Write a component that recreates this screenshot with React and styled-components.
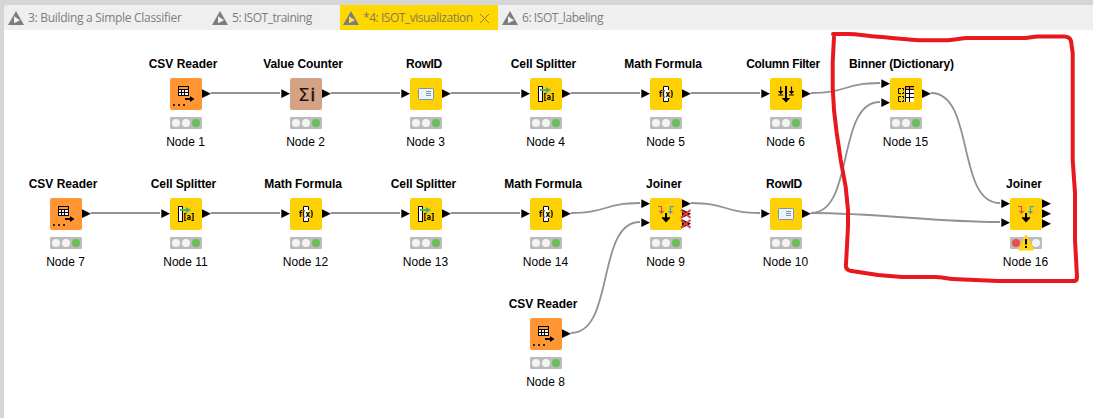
import React from "react";
import styled, { createGlobalStyle } from "styled-components";

const GlobalStyle = createGlobalStyle`
  body { margin: 0; background: #d6d6d6; }
  * { box-sizing: border-box; }
`;

const Window = styled.main`
  display: flex;
  flex-direction: column;
  width: 1093px;
  height: 418px;
  padding: 5px 0 0 4px;
  background: #d6d6d6;
  overflow: hidden;
`;

const TabBar = styled.nav`
  display: flex;
  flex: 0 0 25px;
  height: 25px;
  background: #efefef;
  border-top-left-radius: 3px;
`;

const Tab = styled.div`
  display: flex;
  align-items: center;
  width: ${(p) => p.$width}px;
  padding-left: ${(p) => p.$pad}px;
  background: ${(p) => (p.$active ? "#ffd800" : "transparent")};
  color: ${(p) => (p.$active ? "#85795a" : "#7d7d7d")};
`;

const TabLabel = styled.span`
  margin-left: 4px;
  width: ${(p) => (p.$active ? "110px" : "auto")};
  font: 12px/25px "Open Sans", "Noto Sans", sans-serif;
  letter-spacing: ${(p) => p.$spacing}px;
  white-space: nowrap;
`;

const CloseIcon = styled.svg`
  margin: 1px 0 0 7px;
`;

const Canvas = styled.section`
  position: relative;
  flex: 1;
  background: #fff;
  overflow: hidden;
`;

const Layer = styled.svg`
  position: absolute;
  inset: 0;
  pointer-events: none;
`;

const NodeBox = styled.div`
  position: absolute;
  left: ${(p) => p.$x - 48}px;
  top: ${(p) => p.$y - 52}px;
  width: 120px;
  display: flex;
  flex-direction: column;
  align-items: center;
  font-family: "Liberation Sans", Arial, sans-serif;
  font-size: 12px;
  color: #000;
  white-space: nowrap;
`;

const NodeTitle = styled.div`
  height: 22px;
  padding-top: 1px;
  margin-right: ${(p) => p.$shift * 2}px;
  line-height: 14px;
  font-weight: bold;
  letter-spacing: ${(p) => p.$spacing}px;
`;

const NodeTile = styled.svg`
  display: block;
  width: 32px;
  height: 32px;
  border-radius: 2px;
  background: ${(p) => p.$color};
  overflow: visible;
`;

const Status = styled.div`
  position: relative;
  display: flex;
  align-items: center;
  justify-content: center;
  gap: 2px;
  width: 32px;
  height: 12px;
  margin-top: 7px;
  border-radius: 1px;
  background: #bbb;
`;

const Lamp = styled.i`
  width: 8px;
  height: 8px;
  border-radius: 50%;
  background: ${(p) => p.$color};
`;

const Warning = styled.svg`
  position: absolute;
  left: 7px;
  top: -3px;
`;

const NodeName = styled.div`
  margin-top: 6px;
  margin-right: 1px;
  line-height: 14px;
`;

const Table = () => (
  <>
    <path d="M8 8h11v10H8z" fill="#000" />
    <path d="M9 9h9v2H9z" fill="#ff9633" />
    <path d="M9 12h2v2H9zM12 12h2v2h-2zM15 12h3v2h-3zM9 15h2v2H9zM12 15h2v2h-2zM15 15h3v2h-3z" fill="#fff" />
  </>
);

const icons = {
  csv: (
    <>
      <Table />
      <path d="M15 20h5v-2l4.5 3-4.5 3v-2h-5z" />
      <path d="M3 26h2v2H3zM8 26h2v2H8zM13 26h2v2H13z" fill="#3b210c" />
    </>
  ),
  counter: (
    <g fill="#1c1410">
      <text x="8" y="23" fontFamily="DejaVu Sans" fontSize="18.5">Σ</text>
      <text x="20.7" y="23" fontFamily="Liberation Sans" fontSize="18.5" stroke="#1c1410" strokeWidth=".5">i</text>
    </g>
  ),
  rowid: (
    <>
      <rect x="8.5" y="10.5" width="15" height="11" rx=".8" fill="#e9f5fb" stroke="#8397a0" />
      <path d="M16 13.5h5M16 15.5h5M16 17.5h5" stroke="#7f929b" />
    </>
  ),
  splitter: (
    <>
      <rect x="8.5" y="8.5" width="4" height="15" fill="#fff" stroke="#000" />
      <path d="M10 11h6V9l5 3-5 3v-2h-6z" fill="#45b07c" />
      <text x="13.4" y="22" fontFamily="DejaVu Sans" fontSize="8.3" fontWeight="bold" textLength="10.8" lengthAdjust="spacingAndGlyphs">[a]</text>
    </>
  ),
  math: (
    <>
      <path d="M14 8h5v16h-5z" fill="#fff" />
      <path d="M13.5 12V8.5h5V12M13.5 20v3.5h5V20" fill="none" stroke="#000" />
      <text x="9" y="19" fontFamily="DejaVu Sans" fontSize="9" fontWeight="bold" textLength="14.3" lengthAdjust="spacingAndGlyphs">f(x)</text>
    </>
  ),
  filter: (
    <>
      <path d="M10.7 8.5v6M21.5 8.5v6" stroke="#000" strokeWidth="1.2" />
      <path d="M8 13h5.4l-2.7 3.5zM18.8 13h5.4l-2.7 3.5z" />
      <path d="M8.3 17h4.9M19 17h4.9" stroke="#000" />
      <path d="M15 8h2v12h3.2L16 24.5 11.8 20H15z" />
    </>
  ),
  binner: (
    <>
      <path d="M11 10.5H8.5v5H11M12 10.5h1.5v2M13.5 14v1.5H12M11 18.5H8.5v5H11M12 18.5h1.5v2M13.5 22v1.5H12" fill="none" stroke="#000" />
      <path d="M15 8h9v16h-9z" />
      <path d="M16 9h3v2h-3zM20 9h4v2h-4z" fill="#f58a2a" />
      <path d="M16 12h3v3h-3zM20 12h4v3h-4zM16 16h3v3h-3zM20 16h4v3h-4zM16 20h3v4h-3zM20 20h4v4h-4z" fill="#fff" />
    </>
  ),
  joiner: (
    <>
      <path d="M8 8.5h3.5V14" fill="none" stroke="#e34b46" strokeWidth="1.2" />
      <path d="M8.8 13h5.4l-2.7 3z" fill="#e34b46" />
      <path d="M24 8.5h-3.5V14" fill="none" stroke="#3f9fc4" strokeWidth="1.2" />
      <path d="M17.8 13h5.4l-2.7 3z" fill="#3f9fc4" />
      <path d="M15 15h2v4.5l3-.5v1.3L16 24.5l-4-4.2V19l3 .5z" />
    </>
  ),
};

const colors = { csv: "#ff9633", counter: "#d3a384" };
const defaultColor = "#ffd105";

const titleMetrics = {
  "CSV Reader": [3, 0],
  "Value Counter": [3, -0.08],
  RowID: [2, -0.3],
  "Cell Splitter": [2.5, -0.1],
  "Math Formula": [3, -0.1],
  "Column Filter": [3, -0.28],
  "Binner (Dictionary)": [4.5, -0.17],
  Joiner: [2, 0],
};

const nodes = [
  { t: "CSV Reader", n: 1, x: 170, y: 78, i: "csv", out: [16] },
  { t: "Value Counter", n: 2, x: 290, y: 78, i: "counter", inp: [16], out: [16] },
  { t: "RowID", n: 3, x: 410, y: 78, i: "rowid", inp: [16], out: [16] },
  { t: "Cell Splitter", n: 4, x: 530, y: 78, i: "splitter", inp: [16], out: [16] },
  { t: "Math Formula", n: 5, x: 650, y: 78, i: "math", inp: [16], out: [16] },
  { t: "Column Filter", n: 6, x: 770, y: 78, i: "filter", inp: [16], out: [16] },
  { t: "Binner (Dictionary)", n: 15, x: 890, y: 78, i: "binner", inp: [6, 25], out: [16] },
  { t: "CSV Reader", n: 7, x: 50, y: 198, i: "csv", out: [16] },
  { t: "Cell Splitter", n: 11, x: 170, y: 198, i: "splitter", inp: [16], out: [16] },
  { t: "Math Formula", n: 12, x: 290, y: 198, i: "math", inp: [16], out: [16] },
  { t: "Cell Splitter", n: 13, x: 410, y: 198, i: "splitter", inp: [16], out: [16] },
  { t: "Math Formula", n: 14, x: 530, y: 198, i: "math", inp: [16], out: [16] },
  { t: "Joiner", n: 9, x: 650, y: 198, i: "joiner", inp: [6, 25], out: [6, 16, 26], off: [16, 26] },
  { t: "RowID", n: 10, x: 770, y: 198, i: "rowid", inp: [16], out: [16] },
  { t: "Joiner", n: 16, x: 1010, y: 198, i: "joiner", inp: [6, 25], out: [6, 16, 26], warn: true },
  { t: "CSV Reader", n: 8, x: 530, y: 318, i: "csv", out: [16] },
];

const straight = [
  [211, 93], [331, 93], [451, 93], [571, 93], [691, 93],
  [91, 213], [211, 213], [331, 213], [451, 213],
];

const curves = [
  [811, 93, 880, 83, 36],
  [811, 213, 880, 102, 44],
  [931, 93, 1000, 203, 44],
  [571, 213, 640, 203, 36],
  [571, 333, 640, 222, 44],
  [691, 203, 760, 213, 36],
  [811, 213, 1000, 222, 70],
];

function WorkflowNode({ node }) {
  const lamps = node.warn ? ["#ee4b4f", "#f3f3f3", "#f3f3f3"] : ["#f3f3f3", "#f3f3f3", "#6abf5b"];
  const [shift, spacing] = titleMetrics[node.t];
  return (
    <NodeBox $x={node.x} $y={node.y}>
      <NodeTitle $shift={shift} $spacing={spacing}>{node.t}</NodeTitle>
      <NodeTile viewBox="0 0 32 32" $color={colors[node.i] || defaultColor}>
        {icons[node.i]}
        {(node.inp || []).map((y) => (
          <path key={`i${y}`} d={`M-8.7 ${y - 4.7}L0 ${y - 0.3}L-8.7 ${y + 4.1}z`} />
        ))}
        {node.out.map((y) => (
          <path key={`o${y}`} d={`M32 ${y - 4.7}L41 ${y - 0.3}L32 ${y + 4.1}z`} />
        ))}
        {(node.off || []).map((y) => (
          <path key={`x${y}`} d={`M31 ${y - 4}L40.5 ${y + 3.8}M40.5 ${y - 4}L31 ${y + 3.8}`} stroke="#e4393f" strokeWidth="2" />
        ))}
      </NodeTile>
      <Status>
        {lamps.map((c, k) => <Lamp key={k} $color={c} />)}
        {node.warn && (
          <Warning width="18" height="17" viewBox="0 0 18 17">
            <path d="M9 2L15.6 15.2H2.4z" fill="#ffd60f" stroke="#ffd60f" strokeWidth="2.4" strokeLinejoin="round" />
            <path d="M8 5h2v5.5H8zM8 12h2v2H8z" />
          </Warning>
        )}
      </Status>
      <NodeName>Node {node.n}</NodeName>
    </NodeBox>
  );
}

const TabIcon = ({ fill }) => (
  <svg width="16" height="14" viewBox="0 0 16 14">
    <path d="M8 0L16 14H0z" fill="#7d7d7d" />
    <path d="M6 5.2L12 9.2 6 12.2z" fill={fill} />
  </svg>
);

const tabs = [
  { label: "3: Building a Simple Classifier", width: 204, pad: 4, spacing: -0.3 },
  { label: "5: ISOT_training", width: 132, pad: 4, spacing: -0.48 },
  { label: "*4: ISOT_visualization", width: 158, pad: 3, spacing: -0.46, active: true },
  { label: "6: ISOT_labeling", width: 140, pad: 4, spacing: -0.43 },
];

export default function App() {
  return (
    <Window>
      <GlobalStyle />
      <TabBar>
        {tabs.map((tab) => (
          <Tab key={tab.label} $width={tab.width} $pad={tab.pad} $active={tab.active}>
            <TabIcon fill={tab.active ? "#ffe04a" : "#f4f4f4"} />
            <TabLabel $spacing={tab.spacing} $active={tab.active}>{tab.label}</TabLabel>
            {tab.active && (
              <CloseIcon width="9" height="9" viewBox="0 0 9 9">
                <path d="M0 0L9 9M9 0L0 9" stroke="#85795a" />
              </CloseIcon>
            )}
          </Tab>
        ))}
      </TabBar>
      <Canvas>
        <Layer width="1089" height="388" viewBox="4 30 1089 388" fill="none" stroke="#929292">
          {straight.map(([x, y]) => (
            <path key={`${x}-${y}`} d={`M${x} ${y}H${x + 69}`} strokeWidth="2" />
          ))}
          {curves.map(([x1, y1, x2, y2, k]) => (
            <path key={`${x1}-${y1}-${y2}`} d={`M${x1} ${y1}C${x1 + k} ${y1} ${x2 - k} ${y2} ${x2} ${y2}`} strokeWidth="1.8" />
          ))}
        </Layer>
        {nodes.map((node) => <WorkflowNode key={node.n} node={node} />)}
        <Layer width="1089" height="388" viewBox="4 30 1089 388" fill="none">
          <path
            d="M833 34H848C858 34 866 36 878 36.7C895 38 908 40 925 40.3H948C957 40 960 38 968 38H1025C1030 38 1032 36.5 1038 36.5H1064Q1070 36.5 1071 41L1072.7 53V160L1075 193V240L1077 277Q1077 281 1074 281H998L958 279.3C948 279 942 277 935 277H902L878 275L850 270.7Q845 269 846 264L848 227V210L845.7 187L840.7 160L836.7 133L834 110L832.7 88V63L834 37"
            stroke="#e8191c"
            strokeWidth="4"
            strokeLinejoin="round"
            strokeLinecap="round"
          />
        </Layer>
      </Canvas>
    </Window>
  );
}
